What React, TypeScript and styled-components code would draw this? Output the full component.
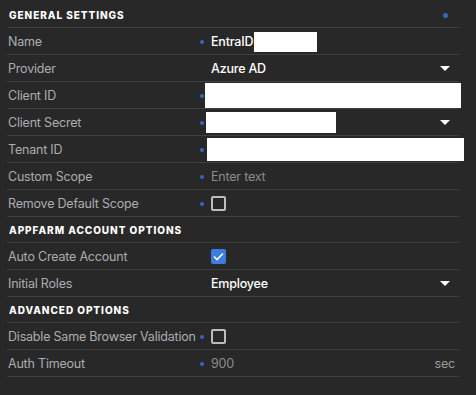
import React from 'react'
import styled, { createGlobalStyle } from 'styled-components'

const Global = createGlobalStyle`
  html, body {
    margin: 0;
    padding: 0;
    background: #282828;
  }
  body {
    font-family: Inter, "Noto Sans", sans-serif;
  }
`

const Panel = styled.div`
  width: 452px;
  margin-left: 7px;
  padding-top: 2px;
  display: flex;
  flex-direction: column;
`

const Header = styled.div`
  height: 26px;
  box-sizing: border-box;
  border-bottom: 1px solid #404040;
  display: flex;
  align-items: center;
  justify-content: space-between;
  padding: 1px 11px 0 2px;
  color: #ffffff;
  font-size: 10px;
  font-weight: 800;
  letter-spacing: 0.95px;
`

const Row = styled.div`
  height: 27px;
  box-sizing: border-box;
  padding-top: 1px;
  border-bottom: 1px solid #404040;
  display: grid;
  grid-template-columns: 193px 11px 1fr;
  align-items: center;
`

const Label = styled.div`
  padding-left: 1px;
  color: #abadb1;
  font-size: 12.5px;
  letter-spacing: -0.2px;
  white-space: nowrap;
`

const Dot = styled.span<{ $size?: number }>`
  display: block;
  width: ${p => p.$size ?? 4}px;
  height: ${p => p.$size ?? 4}px;
  border-radius: 50%;
  background: #3467c4;
`

const Value = styled.div`
  display: flex;
  align-items: center;
  gap: 1px;
  padding-right: 9px;
  min-width: 0;
  color: #ffffff;
  font-size: 12.5px;
  letter-spacing: -0.2px;
  font-weight: 500;
  white-space: nowrap;
`

const Muted = styled.span`
  color: #8c8c8c;
  font-weight: 400;
  flex: 1;
`

const Unit = styled.span`
  color: #9a9a9a;
  font-weight: 400;
  margin-right: -5px;
`

const Grow = styled.span`
  flex: 1;
`

const Redacted = styled.span<{ $w: number; $h: number; $shift?: number }>`
  display: block;
  flex-shrink: 0;
  width: ${p => p.$w}px;
  height: ${p => p.$h}px;
  background: #ffffff;
  margin-left: ${p => p.$shift ?? 0}px;
`

const Box = styled.span<{ $checked?: boolean }>`
  width: 15px;
  height: 15px;
  box-sizing: border-box;
  border-radius: 2px;
  border: ${p => (p.$checked ? 'none' : '2px solid #bdbdbd')};
  background: ${p => (p.$checked ? '#3d7de0' : 'transparent')};
  display: flex;
  align-items: center;
  justify-content: center;
`

const Arrow = () => (
  <svg width="10" height="6" viewBox="0 0 10 6">
    <polygon points="0,0 10,0 5,5" fill="#ffffff" />
  </svg>
)

const Check = () => (
  <svg width="11" height="9" viewBox="0 0 11 9">
    <polyline points="1,4.5 4,7.5 10,1.5" fill="none" stroke="#ffffff" strokeWidth="1.6" />
  </svg>
)

const Field = ({ label, dot = true, children }: { label: string; dot?: boolean; children?: React.ReactNode }) => (
  <Row>
    <Label>{label}</Label>
    <span>{dot && <Dot />}</span>
    <Value>{children}</Value>
  </Row>
)

export default function App() {
  return (
    <>
      <Global />
      <Panel>
        <Header>
          GENERAL SETTINGS
          <Dot $size={5} />
        </Header>
        <Field label="Name">
          EntraID <Redacted $w={63} $h={20} />
        </Field>
        <Field label="Provider" dot={false}>
          <Grow>Azure AD</Grow>
          <Arrow />
        </Field>
        <Field label="Client ID">
          <Redacted $w={256} $h={25} $shift={-6} />
        </Field>
        <Field label="Client Secret">
          <Redacted $w={130} $h={21} $shift={-5} />
          <Grow />
          <Arrow />
        </Field>
        <Field label="Tenant ID">
          <Redacted $w={257} $h={23} $shift={-4} />
        </Field>
        <Field label="Custom Scope">
          <Muted>Enter text</Muted>
        </Field>
        <Field label="Remove Default Scope">
          <Box />
        </Field>
        <Header>APPFARM ACCOUNT OPTIONS</Header>
        <Field label="Auto Create Account" dot={false}>
          <Box $checked>
            <Check />
          </Box>
        </Field>
        <Field label="Initial Roles" dot={false}>
          <Grow>Employee</Grow>
          <Arrow />
        </Field>
        <Header>ADVANCED OPTIONS</Header>
        <Field label="Disable Same Browser Validation">
          <Box />
        </Field>
        <Field label="Auth Timeout">
          <Muted>900</Muted>
          <Unit>sec</Unit>
        </Field>
      </Panel>
    </>
  )
}
